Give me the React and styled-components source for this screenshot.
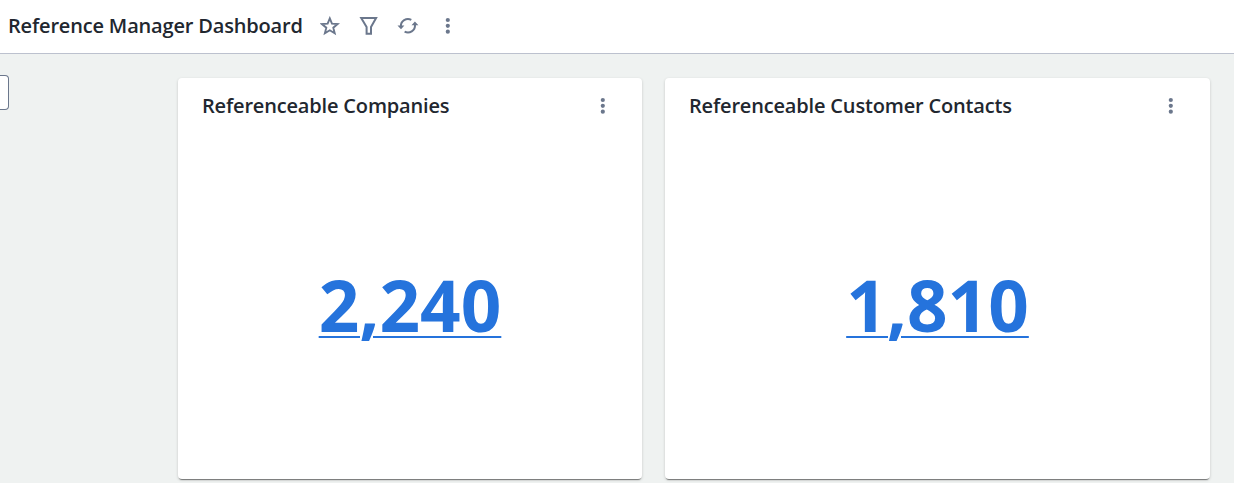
import React from 'react';
import styled, { createGlobalStyle } from 'styled-components';

const metrics = [
  { title: 'Referenceable Companies', value: '2,240' },
  { title: 'Referenceable Customer Contacts', value: '1,810' },
];

const StarIcon = () => (
  <svg width="20" height="20" viewBox="0 0 20 20">
    <path
      d="M9.8 2.4l2.15 5.2 5.75.4-4.4 3.7 1.4 5.6-4.9-3.05-4.9 3.05 1.4-5.6-4.4-3.7 5.75-.4z"
      fill="none"
      stroke="currentColor"
      strokeWidth="1.9"
    />
  </svg>
);

const FilterIcon = () => (
  <svg width="20" height="20" viewBox="0 0 20 20">
    <path
      d="M2.2 2h14.9l-5.1 9.1V17.8H7.6v-6.7z"
      fill="none"
      stroke="currentColor"
      strokeWidth="2"
    />
  </svg>
);

const RefreshIcon = () => (
  <svg width="22" height="20" viewBox="0 0 22 20">
    <g fill="none" stroke="currentColor" strokeWidth="2">
      <path d="M3.9 10.5A7.1 7.1 0 0 1 14.3 3.8" />
      <path d="M18 9A7.1 7.1 0 0 1 7.6 15.7" />
    </g>
    <path d="M.5 9.4h6.9l-3.4 3.8zM14.5 9.2h6.9L17.9 5.4z" fill="currentColor" />
  </svg>
);

const MoreIcon = () => (
  <svg width="6" height="18" viewBox="0 0 6 18" fill="currentColor">
    <circle cx="2.8" cy="3" r="2.1" />
    <circle cx="2.8" cy="8.8" r="2.1" />
    <circle cx="2.8" cy="14.7" r="2.1" />
  </svg>
);

const App = () => {
  return (
    <>
      <GlobalStyle />
      <Page>
        <Header>
          <PageTitle>Reference Manager Dashboard</PageTitle>
          <Actions>
            <IconButton aria-label="Favorite"><StarIcon /></IconButton>
            <IconButton aria-label="Filter"><FilterIcon /></IconButton>
            <IconButton aria-label="Refresh"><RefreshIcon /></IconButton>
            <IconButton aria-label="More"><MoreIcon /></IconButton>
          </Actions>
        </Header>
        <Content>
          <SidePanel>
            <PanelToggle aria-label="Toggle panel" />
          </SidePanel>
          <Cards>
            {metrics.map((metric) => (
              <Card key={metric.title}>
                <CardHeader>
                  <CardTitle>{metric.title}</CardTitle>
                  <CardMenu aria-label="More"><MoreIcon /></CardMenu>
                </CardHeader>
                <CardBody>
                  <Value href="#">{metric.value}</Value>
                </CardBody>
              </Card>
            ))}
          </Cards>
        </Content>
      </Page>
    </>
  );
};

export default App;

const GlobalStyle = createGlobalStyle`
  * {
    box-sizing: border-box;
  }
  body {
    margin: 0;
    overflow: hidden;
    font-family: 'Open Sans', sans-serif;
    color: #22272f;
  }
`;
const Page = styled.div`
  display: flex;
  flex-direction: column;
  height: 483px;
  background: #eff2f1;
`;
const Header = styled.header`
  display: flex;
  flex: none;
  align-items: center;
  height: 54px;
  padding: 0 0 1px 8px;
  background: #fff;
  border-bottom: 1px solid #bcc1ce;
`;
const PageTitle = styled.h1`
  margin: 0;
  width: 302px;
  font-size: 20px;
  line-height: 28px;
  font-weight: 600;
  letter-spacing: -0.17px;
  white-space: nowrap;
`;
const Actions = styled.div`
  display: grid;
  grid-template-columns: 39px 39px 39px 41px;
  align-items: center;
`;
const IconButton = styled.button`
  display: flex;
  align-items: center;
  justify-content: center;
  height: 24px;
  padding: 0;
  border: 0;
  background: none;
  color: #6b778c;
`;
const Content = styled.main`
  display: flex;
  flex: 1;
  min-height: 0;
`;
const SidePanel = styled.aside`
  flex: none;
  width: 178px;
  padding-top: 21px;
`;
const PanelToggle = styled.button`
  display: block;
  width: 9px;
  height: 35px;
  padding: 0;
  border: 1px solid #6b778c;
  border-left: 0;
  border-radius: 0 4px 4px 0;
  background: #fff;
`;
const Cards = styled.section`
  display: grid;
  grid-template-columns: 464px 545px;
  gap: 23px;
  padding: 24px 24px 4px 0;
`;
const Card = styled.article`
  display: flex;
  flex-direction: column;
  border-radius: 4px;
  background: #fff;
  box-shadow: 0 2px 1px -1px rgba(0, 0, 0, 0.45), 0 1px 3px rgba(0, 0, 0, 0.18);
`;
const CardHeader = styled.div`
  display: flex;
  align-items: center;
  justify-content: space-between;
  height: 56px;
  padding: 0 36px 0 24px;
`;
const CardTitle = styled.h2`
  margin: 0;
  font-size: 20px;
  line-height: 28px;
  font-weight: 600;
  letter-spacing: -0.17px;
  white-space: nowrap;
`;
const CardMenu = styled(IconButton)`
  width: 6px;
`;
const CardBody = styled.div`
  display: flex;
  flex: 1;
  align-items: center;
  justify-content: center;
  padding-bottom: 4px;
`;
const Value = styled.a`
  color: #2573dc;
  font-size: 71px;
  line-height: 96px;
  font-weight: 700;
  text-decoration: underline;
  text-decoration-thickness: 2px;
  text-underline-offset: 4px;
`;
